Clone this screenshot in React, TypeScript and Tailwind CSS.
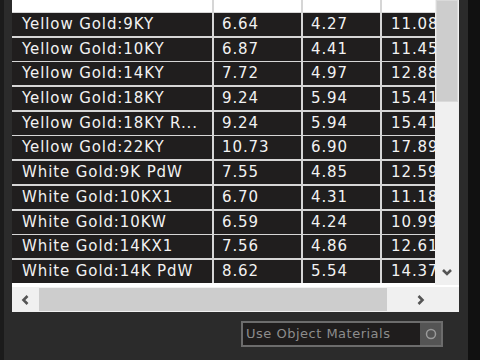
import React from 'react'

const rows = [
  ['Yellow Gold:9KY', '6.64', '4.27', '11.08'],
  ['Yellow Gold:10KY', '6.87', '4.41', '11.45'],
  ['Yellow Gold:14KY', '7.72', '4.97', '12.88'],
  ['Yellow Gold:18KY', '9.24', '5.94', '15.41'],
  ['Yellow Gold:18KY R...', '9.24', '5.94', '15.41'],
  ['Yellow Gold:22KY', '10.73', '6.90', '17.89'],
  ['White Gold:9K PdW', '7.55', '4.85', '12.59'],
  ['White Gold:10KX1', '6.70', '4.31', '11.18'],
  ['White Gold:10KW', '6.59', '4.24', '10.99'],
  ['White Gold:14KX1', '7.56', '4.86', '12.61'],
  ['White Gold:14K PdW', '8.62', '5.54', '14.37'],
]

function Chevron({ dir }: { dir: 'left' | 'right' | 'down' }) {
  const pts =
    dir === 'left' ? '7.5,2 3.5,6 7.5,10' : dir === 'right' ? '4.5,2 8.5,6 4.5,10' : '2,4 6,8 10,4'
  return (
    <svg width="12" height="12" viewBox="0 0 12 12">
      <polyline points={pts} fill="none" stroke="#555555" strokeWidth="2.6" />
    </svg>
  )
}

export default function App() {
  return (
    <div
      className="flex w-[480px] h-[360px] bg-[#2b2b2b] overflow-hidden"
      style={{ fontFamily: '"DejaVu Sans", Verdana, sans-serif' }}
    >
      <div className="w-[4px] bg-[#1b1b1b]" />

      <div className="flex flex-col w-[455px] pl-[8px]">
        {/* Grid panel */}
        <div className="flex flex-col w-[447px] h-[312px] bg-[#f0f0f0]">
          <div className="flex h-[285px]">
            {/* Table */}
            <div className="flex flex-col w-[423px] bg-[#d6d6d6] overflow-hidden">
              <div className="flex h-[12px] gap-x-[2px] shrink-0">
                <div className="w-[200px] bg-white" />
                <div className="w-[87px] bg-white" />
                <div className="w-[77px] bg-white" />
                <div className="flex-1 bg-white" />
              </div>
              <div className="flex flex-col gap-y-[1.7px] mt-[1px]">
                {rows.map((r) => (
                  <div
                    key={r[0]}
                    className="flex h-[23px] gap-x-[2px] text-[15px] tracking-[0.9px] text-[#f2f2f2] leading-none"
                  >
                    <div className="w-[200px] bg-[#201e1e] pl-[10px] flex items-center whitespace-nowrap overflow-hidden">
                      {r[0]}
                    </div>
                    <div className="w-[87px] bg-[#201e1e] pl-[8px] flex items-center">{r[1]}</div>
                    <div className="w-[77px] bg-[#201e1e] pl-[8px] flex items-center">{r[2]}</div>
                    <div className="flex-1 bg-[#201e1e] pl-[9px] flex items-center overflow-hidden whitespace-nowrap">
                      {r[3]}
                    </div>
                  </div>
                ))}
              </div>
              <div className="flex-1 bg-white" />
            </div>

            {/* Vertical scrollbar */}
            <div className="flex flex-col w-[24px] bg-[#f0f0f0]">
              <div className="h-[102px] mx-[1px] bg-[#cdcdcd] border border-[#dadada]" />
              <div className="flex-1" />
              <div className="h-[24px] mb-[1px] flex items-center justify-center">
                <Chevron dir="down" />
              </div>
            </div>
          </div>

          {/* Horizontal scrollbar */}
          <div className="flex items-center h-[27px] border-t-2 border-white">
            <div className="w-[27px] flex items-center justify-center">
              <Chevron dir="left" />
            </div>
            <div className="w-[348px] h-[23px] bg-[#cdcdcd]" />
            <div className="flex-1 flex items-center justify-end pr-[9px]">
              <Chevron dir="right" />
            </div>
            <div className="w-[24px]" />
          </div>
        </div>

        {/* Bottom control */}
        <div className="flex justify-end pr-[16px] mt-[9px]">
          <div className="flex items-center w-[202px] h-[26px] border-2 border-[#6c6c6c] bg-[#1f1d1d]">
            <span className="pl-[3px] text-[13px] tracking-[0.5px] text-[#8c8c8c] whitespace-nowrap">
              Use Object Materials
            </span>
            <div className="ml-auto w-[21px] h-[22px] bg-[#545454] flex items-center justify-center">
              <svg width="12" height="12" viewBox="0 0 12 12">
                <circle cx="6" cy="6" r="4.5" fill="none" stroke="#9a9a9a" strokeWidth="1.5" />
              </svg>
            </div>
          </div>
        </div>
      </div>

      <div className="w-[9px] bg-[#2b2b2b]" />
      <div className="w-[12px] bg-[#111111]" />
    </div>
  )
}
